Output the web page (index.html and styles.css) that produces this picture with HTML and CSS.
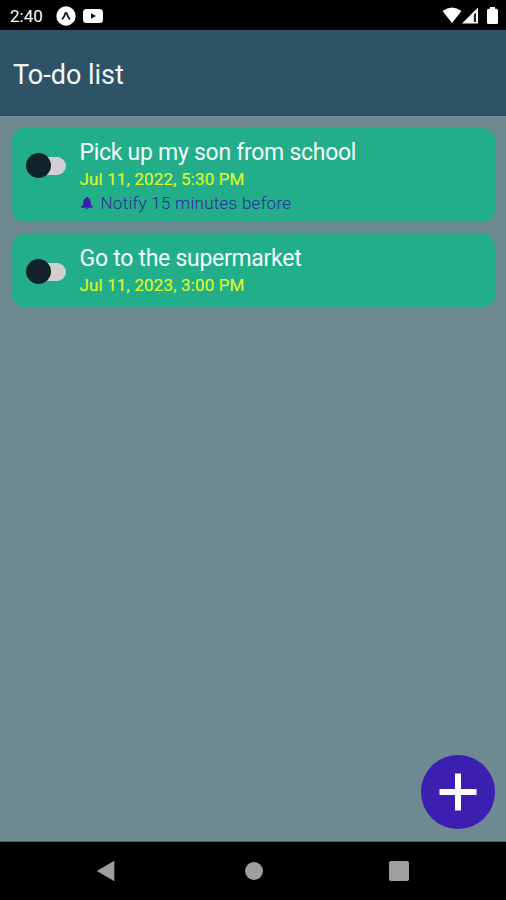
FILE: index.html
```html
<!DOCTYPE html>
<html lang="en">
<head>
    <meta charset="UTF-8">
    <meta name="viewport" content="width=device-width, initial-scale=1.0">
    <title>To-do list</title>
    <link rel="stylesheet" href="styles.css">
</head>
<body>

    <div class="status-bar">
        <span class="clock">2:40</span>
        <svg class="expo" width="20" height="20" viewBox="0 0 20 20">
            <circle cx="10" cy="10" r="9.7" fill="#fff"/>
            <path d="M6 13.5 Q8.4 11 9.4 7 H10.6 Q11.6 11 14 13.5" fill="none" stroke="#111" stroke-width="1.7"/>
        </svg>
        <svg class="video" width="20" height="14" viewBox="0 0 20 14">
            <rect width="20" height="14" rx="3.5" fill="#fff"/>
            <path d="M8 4.2 L13 7 L8 9.8 Z" fill="#111"/>
        </svg>
        <div class="status-icons">
            <svg class="wifi" width="20" height="17" viewBox="0 0 20 17">
                <path d="M0.5 4 Q10 -3 19.5 4 L10 16 Z" fill="#fff"/>
            </svg>
            <svg class="signal" width="17" height="17" viewBox="0 0 17 17">
                <path d="M0 16.5 L16 0.5 V16.5 Z" fill="#fff"/>
                <path d="M11.8 7.5 L14 5.5 V15 H11.8 Z" fill="#222"/>
            </svg>
            <svg class="battery" width="11" height="17" viewBox="0 0 11 17">
                <path d="M3 0 H8 V1.7 H9.5 Q11 1.7 11 3.2 V15.5 Q11 17 9.5 17 H1.5 Q0 17 0 15.5 V3.2 Q0 1.7 1.5 1.7 H3 Z" fill="#fff"/>
            </svg>
        </div>
    </div>

    <header>
        <h1>To-do list</h1>
    </header>

    <main>
        <div class="card with-notify">
            <div class="switch"></div>
            <div class="info">
                <h2 class="title">Pick up my son from school</h2>
                <p class="date">Jul 11, 2022, 5:30 PM</p>
                <p class="notify">
                    <svg class="bell" width="12" height="13" viewBox="0 0 12 13">
                        <path d="M6 0 Q7.2 0 7.2 1 Q9.8 2 9.8 5 V7.6 L11.8 9.8 V10.8 H0.2 V9.8 L2.2 7.6 V5 Q2.2 2 4.8 1 Q4.8 0 6 0 Z M4.7 11 H7.3 Q7.1 12 6 12 Q4.9 12 4.7 11 Z" fill="#3a1cb0"/>
                    </svg>
                    <span>Notify 15 minutes before</span>
                </p>
            </div>
        </div>
        <div class="card">
            <div class="switch"></div>
            <div class="info">
                <h2 class="title">Go to the supermarket</h2>
                <p class="date">Jul 11, 2023, 3:00 PM</p>
            </div>
        </div>
        <button class="add-button" aria-label="Add">
            <svg width="38" height="38" viewBox="0 0 38 38">
                <path d="M19 0.5 V37.5 M0.5 19 H37.5" stroke="#fff" stroke-width="6"/>
            </svg>
        </button>
    </main>

    <nav>
        <svg class="back" width="19" height="22" viewBox="0 0 19 22">
            <path d="M18.3 0.8 V21.2 L0.8 11 Z" fill="#9e9e9e"/>
        </svg>
        <div class="home"></div>
        <div class="recent"></div>
    </nav>

</body>
</html>
```

FILE: styles.css
```css
* {
    box-sizing: border-box;
}

body {
    margin: 0;
    height: 900px;
    display: flex;
    flex-direction: column;
    overflow: hidden;
    font-family: Roboto, "Liberation Sans", sans-serif;
    background-color: #6f8993;
}

.status-bar {
    height: 30px;
    padding: 1px 8px 0 10px;
    display: flex;
    align-items: center;
    background-color: #000;
    color: #fff;
}

.clock {
    width: 46px;
    font-size: 17px;
}

.video {
    margin-left: 7px;
}

.status-icons {
    margin-left: auto;
    display: flex;
}

.battery {
    margin-left: 8px;
}

header {
    height: 86px;
    padding: 0 13px;
    display: flex;
    align-items: center;
    background-color: #2e5366;
    border-bottom: 1px solid #294d60;
}

header h1 {
    margin: 5px 0 0;
    font-size: 27px;
    font-weight: 400;
    line-height: 32px;
    color: #f4f8fa;
}

main {
    flex: 1;
    padding: 12px 11px 0 12px;
    position: relative;
    border-bottom: 1px solid #4d626b;
}

.card {
    height: 73px;
    padding: 11px 14px 0;
    display: flex;
    margin-bottom: 12px;
    border-radius: 12px;
    background-color: #22ae88;
}

.with-notify {
    height: 94px;
}

.switch {
    width: 40px;
    height: 25px;
    margin: 14px 13.5px 0 0;
    padding: 3.5px 0 0 9px;
    position: relative;
}

.switch::before {
    content: "";
    display: block;
    width: 31px;
    height: 18px;
    border-radius: 9px;
    background-color: #d0d0d0;
}

.switch::after {
    content: "";
    position: absolute;
    top: 0;
    left: 0;
    width: 25px;
    height: 25px;
    border-radius: 50%;
    background-color: #12222b;
}

.title {
    margin: 0;
    font-size: 23px;
    font-weight: 400;
    line-height: 28px;
    letter-spacing: -0.28px;
    color: #f2fffb;
}

.date {
    margin: 0;
    font-size: 17px;
    line-height: 25px;
    letter-spacing: 0.14px;
    color: #dcf82a;
    -webkit-text-stroke: 0.2px #dcf82a;
}

.notify {
    margin: 0;
    display: flex;
    align-items: center;
    font-size: 17px;
    font-weight: 300;
    line-height: 23px;
    letter-spacing: 0.28px;
    color: #2c2c9c;
}

.bell {
    margin: 0 8px 0 1px;
}

.add-button {
    position: absolute;
    right: 11.5px;
    bottom: 12px;
    width: 74px;
    height: 74px;
    padding: 0;
    display: flex;
    align-items: center;
    justify-content: center;
    border: none;
    border-radius: 50%;
    background-color: #3a1fb0;
    cursor: pointer;
}

nav {
    height: 58px;
    padding: 0 97px 0 96px;
    display: flex;
    align-items: center;
    justify-content: space-between;
    background-color: #000;
}

.home {
    width: 18px;
    height: 18px;
    margin-left: 3px;
    border-radius: 50%;
    background-color: #9e9e9e;
}

.recent {
    width: 20px;
    height: 20px;
    border-radius: 2px;
    background-color: #9e9e9e;
}
```
